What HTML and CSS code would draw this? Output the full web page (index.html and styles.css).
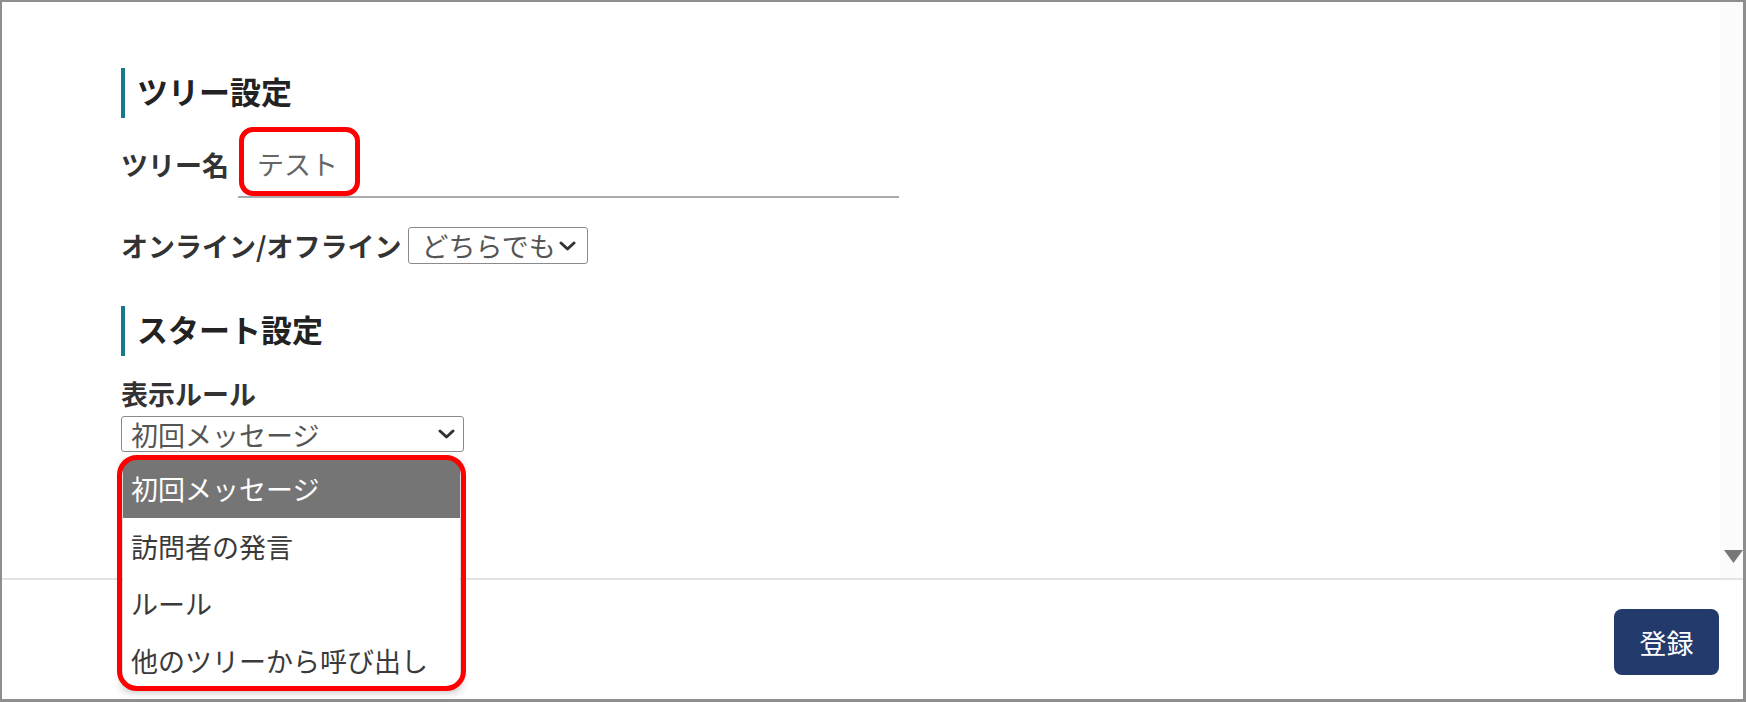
FILE: index.html
```html
<!DOCTYPE html>
<html lang="ja">
<head>
    <meta charset="UTF-8">
    <meta name="viewport" content="width=device-width, initial-scale=1.0">
    <title>ツリー設定</title>
    <link rel="stylesheet" href="styles.css">
</head>
<body>
    <div class="dialog">
        <div class="dialog-body">
            <div class="content">
                <h2 class="section-title">ツリー設定</h2>

                <div class="form-row tree-name">
                    <label class="field-label" for="tree-name">ツリー名</label>
                    <span class="text-field">
                        <input id="tree-name" type="text" value="テスト">
                        <span class="mark mark-name"></span>
                    </span>
                </div>

                <div class="form-row online">
                    <span class="field-label">オンライン/オフライン</span>
                    <div class="select select-small">
                        <span class="select-value">どちらでも</span>
                        <svg class="chevron" viewBox="0 0 17 10" width="17" height="10">
                            <path d="M2 2 L8.5 8 L15 2" fill="none" stroke="#333" stroke-width="3" stroke-linecap="round" stroke-linejoin="round"/>
                        </svg>
                    </div>
                </div>

                <h2 class="section-title start">スタート設定</h2>

                <div class="field-block">
                    <span class="field-label">表示ルール</span>
                    <div class="select select-wide">
                        <span class="select-value">初回メッセージ</span>
                        <svg class="chevron" viewBox="0 0 17 10" width="17" height="10">
                            <path d="M2 2 L8.5 8 L15 2" fill="none" stroke="#333" stroke-width="3" stroke-linecap="round" stroke-linejoin="round"/>
                        </svg>
                    </div>
                </div>
            </div>

            <div class="scrollbar">
                <svg class="scroll-arrow" viewBox="0 0 19 13" width="19" height="13">
                    <polygon points="0,0 19,0 9.5,13" fill="#777"/>
                </svg>
            </div>
        </div>

        <div class="dialog-footer">
            <button class="btn-primary">登録</button>
        </div>

        <!-- open list of the 表示ルール select -->
        <ul class="dropdown">
            <li class="selected">初回メッセージ</li>
            <li>訪問者の発言</li>
            <li>ルール</li>
            <li>他のツリーから呼び出し</li>
        </ul>
        <span class="mark mark-list"></span>
    </div>
</body>
</html>
```

FILE: styles.css
```css
:root {
    --teal: #17798b;
    --navy: #233a6d;
    --mark: #ff0000;
    --text: #333;
}

* {
    margin: 0;
    padding: 0;
    box-sizing: border-box;
    font-family: "Noto Sans CJK JP", "Noto Sans", sans-serif;
}

body {
    background: #fff;
}

.dialog {
    position: relative;
    width: 1746px;
    height: 702px;
    border: solid #8e8e8e;
    border-width: 2px 3px 3px 2px;
    display: flex;
    flex-direction: column;
    overflow: hidden;
}

.dialog-body {
    height: 576px;
    display: flex;
}

.content {
    flex: 1;
    padding: 66px 0 0 119px;
}

.scrollbar {
    width: 23px;
    background: #fbfbfb;
    display: flex;
    flex-direction: column;
    justify-content: flex-end;
    align-items: flex-end;
    padding-bottom: 15px;
}

.section-title {
    font-size: 31px;
    font-weight: 700;
    line-height: 46px;
    padding-bottom: 4px;
    color: #222;
    border-left: 4px solid var(--teal);
    padding-left: 12px;
}

.section-title.start {
    margin-top: 41px;
}

.field-label {
    font-size: 27px;
    font-weight: 700;
    color: var(--text);
    white-space: nowrap;
}

.form-row {
    display: flex;
    align-items: center;
    gap: 9px;
}

.tree-name {
    margin-top: 12px;
}

.online {
    margin-top: 28px;
    gap: 7px;
}

.text-field {
    position: relative;
    display: block;
}

.text-field input {
    display: block;
    width: 661px;
    height: 68px;
    border: none;
    border-bottom: 2px solid #aaa;
    padding: 0 0 0 19px;
    font-size: 27px;
    color: #666;
    outline: none;
    background: transparent;
}

.select {
    display: flex;
    align-items: center;
    border: 1.5px solid #8a8a8a;
    border-radius: 3px;
    background: #fff;
    font-size: 27px;
    color: #555;
    white-space: nowrap;
}

.select-value {
    line-height: 1;
}

.select-small {
    width: 180px;
    height: 37px;
    padding: 0 6px 0 12px;
    gap: 3px;
    flex: none;
}

.select-wide {
    width: 343px;
    height: 36px;
    padding: 0 8px 0 9px;
    justify-content: space-between;
    margin-top: 4px;
}

.field-block {
    margin-top: 20px;
}

.field-block .field-label {
    display: block;
    line-height: 36px;
}

.dialog-footer {
    flex: 1;
    border-top: 2px solid #e4e4e4;
    display: flex;
    justify-content: flex-end;
    align-items: flex-start;
    padding: 29px 24px 0 0;
}

.btn-primary {
    width: 105px;
    height: 66px;
    border: none;
    border-radius: 8px;
    background: var(--navy);
    color: #fff;
    font-size: 27px;
    cursor: pointer;
}

.dropdown {
    position: absolute;
    top: 458px;
    left: 121px;
    width: 337px;
    list-style: none;
    background: #fff;
    box-shadow: 0 2px 10px rgba(0, 0, 0, 0.3);
    border-radius: 0 0 6px 6px;
}

.dropdown li {
    height: 57px;
    line-height: 57px;
    padding-left: 8px;
    font-size: 27px;
    color: #3a3a3a;
    white-space: nowrap;
}

.dropdown li.selected {
    height: 58px;
    line-height: 58px;
    background: #757575;
    color: #fff;
}

/* red annotation frames */
.mark {
    position: absolute;
    border: 5px solid var(--mark);
    pointer-events: none;
}

.mark-name {
    left: 1px;
    top: -3px;
    width: 121px;
    height: 69px;
    border-radius: 14px;
}

.mark-list {
    left: 115px;
    top: 453px;
    width: 349px;
    height: 236px;
    border-radius: 20px;
}
```
